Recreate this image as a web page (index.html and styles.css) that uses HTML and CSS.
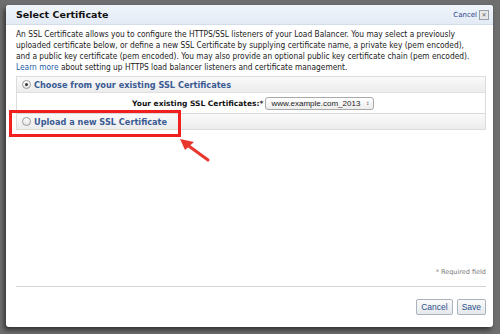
FILE: index.html
```html
<!DOCTYPE html>
<html>
<head>
  <title>Select Certificate</title>
  <link rel="stylesheet" href="styles.css">
</head>
<body>
  <div class="backdrop">
    <div class="dialog">
      <div class="dialog-title">
        <span class="title-text">Select Certificate</span>
        <span class="title-close">
          <a class="close-link">Cancel</a>
          <span class="close-box">&#x2715;</span>
        </span>
      </div>
      <div class="dialog-body">
        <p class="intro">
          <span>An SSL Certificate allows you to configure the HTTPS/SSL listeners of your Load Balancer. You may select a previously</span>
          <span>uploaded certificate below, or define a new SSL Certificate by supplying certificate name, a private key (pem encoded),</span>
          <span>and a public key certificate (pem encoded). You may also provide an optional public key certificate chain (pem encoded).</span>
          <span><a class="learn">Learn more</a> about setting up HTTPS load balancer listeners and certificate management.</span>
        </p>
        <div class="options">
          <div class="option-head">
            <span class="radio checked"></span>
            <span class="option-label">Choose from your existing SSL Certificates</span>
          </div>
          <div class="option-row">
            <span class="field-label">Your existing SSL Certificates:<span class="star">*</span></span>
            <span class="select">www.example.com_2013 <span class="arrows">&#x2195;</span></span>
          </div>
          <div class="option-head second">
            <span class="radio"></span>
            <span class="option-label">Upload a new SSL Certificate</span>
          </div>
        </div>
        <div class="spacer"></div>
        <div class="required">* Required field</div>
      </div>
      <div class="dialog-footer">
        <button class="btn">Cancel</button>
        <button class="btn">Save</button>
      </div>
      <div class="callout"></div>
      <svg class="arrow" width="40" height="34" viewBox="0 0 40 34">
        <line x1="30" y1="24" x2="8" y2="8" stroke="#e8372c" stroke-width="3" stroke-linecap="round"/>
        <polygon points="2,3 16,6 7,14" fill="#e8372c"/>
      </svg>
    </div>
  </div>
</body>
</html>
```
FILE: styles.css
```css
html, body {
  margin: 0;
  padding: 0;
}
body {
  font-family: "DejaVu Sans", Verdana, sans-serif;
  background-color: #6e6e6e;
  width: 500px;
  height: 334px;
  overflow: hidden;
}
.backdrop {
  padding: 5px 7px 0 6px;
}
.dialog {
  position: relative;
  background: #fff;
  height: 322px;
  display: flex;
  flex-direction: column;
  border-radius: 3px;
  box-shadow: -2px 3px 5px rgba(0,0,0,0.55);
}
.dialog-title {
  height: 19px;
  background: linear-gradient(#f0f5fb, #e3ebf5);
  border-bottom: 1px solid #d3dde9;
  border-radius: 3px 3px 0 0;
  display: flex;
  align-items: center;
  justify-content: space-between;
  padding: 0 4px 0 10px;
}
.title-text {
  font-size: 9.5px;
  font-weight: bold;
  color: #111;
}
.title-close {
  display: flex;
  align-items: center;
  gap: 2px;
}
.close-link {
  font-size: 7px;
  color: #2d3f8c;
}
.close-box {
  width: 8px;
  height: 8px;
  border: 1px solid #9aa0a8;
  background: #e8e8e8;
  font-size: 6px;
  line-height: 8px;
  text-align: center;
  color: #666;
}
.dialog-body {
  flex: 1;
  display: flex;
  flex-direction: column;
  padding: 4px 7px 0 10px;
}
.intro {
  margin: 0;
  font-family: "DejaVu Sans Condensed", "DejaVu Sans", sans-serif;
  font-stretch: condensed;
  font-size: 8.3px;
  line-height: 11px;
  color: #1a1a1a;
}
.intro span {
  display: block;
  white-space: nowrap;
}
.learn {
  color: #1f5fa8;
}
.options {
  margin-top: 3px;
  border: 1px solid #dcdcdc;
}
.option-head {
  height: 15px;
  background: linear-gradient(#fafafa, #ececec);
  display: flex;
  align-items: center;
  padding-left: 5px;
  gap: 3px;
}
.option-head.second {
  border-top: 1px solid #d8d8d8;
}
.radio {
  width: 7px;
  height: 7px;
  border-radius: 50%;
  border: 1px solid #9a9a9a;
  background: linear-gradient(#fff, #e4e4e4);
  display: flex;
  align-items: center;
  justify-content: center;
}
.radio.checked::after {
  content: "";
  width: 3px;
  height: 3px;
  border-radius: 50%;
  background: #333;
}
.option-label {
  font-size: 8.2px;
  font-weight: bold;
  color: #3b5b94;
}
.option-row {
  height: 20px;
  border-top: 1px solid #e0e0e0;
  display: flex;
  align-items: center;
  gap: 2px;
  padding-left: 115px;
}
.field-label {
  font-size: 7.5px;
  font-weight: bold;
  color: #111;
}
.star {
  color: #333;
}
.select {
  font-family: "Liberation Sans", Arial, sans-serif;
  font-size: 8px;
  color: #222;
  height: 11px;
  line-height: 11px;
  padding: 0 4px 0 5px;
  border: 1px solid #a9a9a9;
  border-radius: 3px;
  background: linear-gradient(#fff, #ededed);
  display: flex;
  gap: 6px;
}
.arrows {
  font-size: 6px;
}
.spacer {
  flex: 1;
}
.required {
  text-align: right;
  font-size: 6.5px;
  color: #777;
  padding-bottom: 10px;
}
.dialog-footer {
  margin: 0 7px 0 10px;
  border-top: 1px solid #d4d4d4;
  height: 40px;
  display: flex;
  align-items: center;
  justify-content: flex-end;
  gap: 4px;
}
.btn {
  font-family: "Liberation Sans", Arial, sans-serif;
  font-size: 8.5px;
  color: #2c4f8c;
  height: 16px;
  padding: 0 4px;
  border: 1px solid #aab2bd;
  border-radius: 2px;
  background: linear-gradient(#fbfbfb, #e5e8ec);
}
.callout {
  position: absolute;
  left: 3px;
  top: 105px;
  width: 166px;
  height: 21px;
  border: 3px solid #f21f1f;
}
.arrow {
  position: absolute;
  left: 172px;
  top: 131px;
}
```
